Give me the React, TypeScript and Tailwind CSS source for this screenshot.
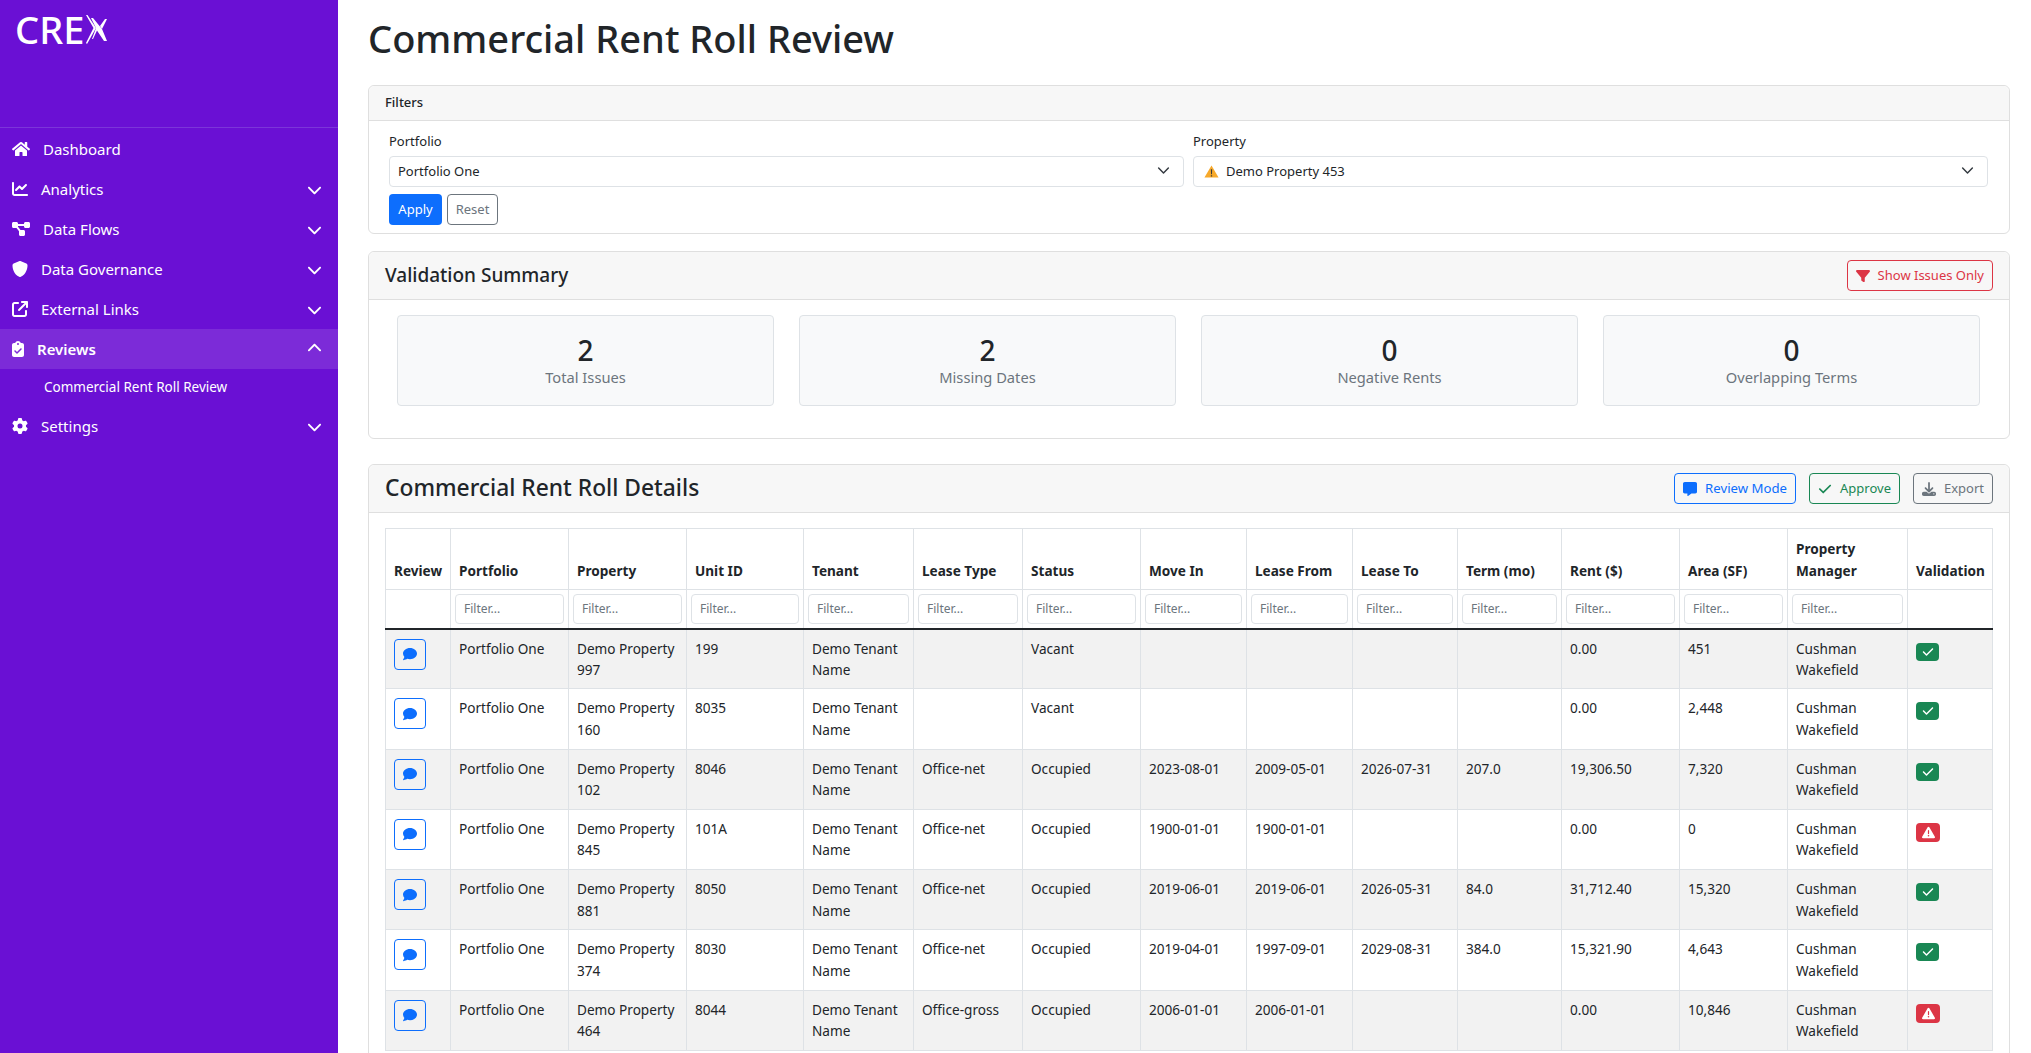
import { FaChartLine, FaChevronDown, FaChevronUp, FaDiagramProject, FaGear, FaShield, FaArrowUpRightFromSquare, FaClipboardCheck, FaCheck, FaFilter, FaComment, FaMessage, FaDownload, FaTriangleExclamation } from "react-icons/fa6";
import { FaHome } from "react-icons/fa";
import type { ReactNode } from "react";

const font = { fontFamily: '"Noto Sans", sans-serif' };

const nav: { label: string; icon: ReactNode; arrow?: boolean }[] = [
  { label: "Dashboard", icon: <FaHome className="h-4 w-[18px]" /> },
  { label: "Analytics", icon: <FaChartLine className="h-4 w-4" />, arrow: true },
  { label: "Data Flows", icon: <FaDiagramProject className="h-4 w-[18px]" />, arrow: true },
  { label: "Data Governance", icon: <FaShield className="h-4 w-4" />, arrow: true },
  { label: "External Links", icon: <FaArrowUpRightFromSquare className="h-4 w-4" />, arrow: true },
];

const columns = [
  { label: "Review", width: "w-[65px]" },
  { label: "Portfolio", width: "w-[118px]", filter: true },
  { label: "Property", width: "w-[118px]", filter: true },
  { label: "Unit ID", width: "w-[117px]", filter: true },
  { label: "Tenant", width: "w-[110px]", filter: true },
  { label: "Lease Type", width: "w-[109px]", filter: true },
  { label: "Status", width: "w-[118px]", filter: true },
  { label: "Move In", width: "w-[106px]", filter: true },
  { label: "Lease From", width: "w-[106px]", filter: true },
  { label: "Lease To", width: "w-[105px]", filter: true },
  { label: "Term (mo)", width: "w-[104px]", filter: true },
  { label: "Rent ($)", width: "w-[118px]", filter: true },
  { label: "Area (SF)", width: "w-[108px]", filter: true },
  { label: "Property Manager", width: "w-[120px]", filter: true },
  { label: "Validation", width: "w-[85px]" },
];

const rows = [
  { property: "997", unit: "199", type: "", status: "Vacant", moveIn: "", from: "", to: "", term: "", rent: "0.00", area: "451", ok: true },
  { property: "160", unit: "8035", type: "", status: "Vacant", moveIn: "", from: "", to: "", term: "", rent: "0.00", area: "2,448", ok: true },
  { property: "102", unit: "8046", type: "Office-net", status: "Occupied", moveIn: "2023-08-01", from: "2009-05-01", to: "2026-07-31", term: "207.0", rent: "19,306.50", area: "7,320", ok: true },
  { property: "845", unit: "101A", type: "Office-net", status: "Occupied", moveIn: "1900-01-01", from: "1900-01-01", to: "", term: "", rent: "0.00", area: "0", ok: false },
  { property: "881", unit: "8050", type: "Office-net", status: "Occupied", moveIn: "2019-06-01", from: "2019-06-01", to: "2026-05-31", term: "84.0", rent: "31,712.40", area: "15,320", ok: true },
  { property: "374", unit: "8030", type: "Office-net", status: "Occupied", moveIn: "2019-04-01", from: "1997-09-01", to: "2029-08-31", term: "384.0", rent: "15,321.90", area: "4,643", ok: true },
  { property: "464", unit: "8044", type: "Office-gross", status: "Occupied", moveIn: "2006-01-01", from: "2006-01-01", to: "", term: "", rent: "0.00", area: "10,846", ok: false },
];

const stats = [
  { value: "2", label: "Total Issues" },
  { value: "2", label: "Missing Dates" },
  { value: "0", label: "Negative Rents" },
  { value: "0", label: "Overlapping Terms" },
];

function Logo() {
  return (
    <div className="flex items-start h-[128px] pl-[15px] pt-[3px] border-b border-[#7c35d9]">
      <span className="text-[38px] leading-[52px] font-medium text-white">CRE</span>
      <svg viewBox="0 0 21 29" className="w-[21px] h-[29px] mt-[12px] ml-[2px]" fill="white">
        <path d="M0 0 1.5 0 10 13 1 29 0 28 7.5 13Z" />
        <path d="M5 3 7 3 16 14 21 26 18 26 11 15.5 7 24 6 24 10 13Z" />
        <path d="M14 11 19 4 21 4 16 14Z" />
      </svg>
    </div>
  );
}

function NavRow({ label, icon, arrow }: { label: string; icon: ReactNode; arrow?: boolean }) {
  return (
    <a className="flex items-center h-10 pl-3 pr-[16px] text-[15px] text-white">
      {icon}
      <span className="ml-[13px] flex-1">{label}</span>
      {arrow && <FaChevronDown className="w-[15px] h-[15px]" />}
    </a>
  );
}

function Sidebar() {
  return (
    <aside className="w-[338px] shrink-0 bg-[#6a10d4] text-white">
      <Logo />
      <nav className="pt-px">
        {nav.map((n) => (
          <NavRow key={n.label} {...n} />
        ))}
        <a className="flex items-center h-10 pl-3 pr-[16px] bg-[#7c2bd8] text-[15px] font-semibold">
          <FaClipboardCheck className="w-3 h-4" />
          <span className="ml-[13px] flex-1">Reviews</span>
          <FaChevronUp className="w-[15px] h-[15px] -mt-0.5" />
        </a>
        <a className="flex items-center h-[37px] pl-11 text-[13.5px]">Commercial Rent Roll Review</a>
        <NavRow label="Settings" icon={<FaGear className="h-4 w-4" />} arrow />
      </nav>
    </aside>
  );
}

function Select({ children }: { children: ReactNode }) {
  return (
    <div className="flex items-center justify-between h-[31px] pl-2 pr-[13px] border border-[#dee2e6] rounded bg-white text-[13px] text-[#212529]">
      <span className="flex items-center">{children}</span>
      <svg viewBox="0 0 16 16" className="w-[13px] h-[13px] -mt-[2px]" fill="none" stroke="#343a40" strokeWidth="1.8" strokeLinecap="round" strokeLinejoin="round">
        <path d="m2 5 6 6 6-6" />
      </svg>
    </div>
  );
}

function WarnIcon() {
  return (
    <svg viewBox="0 0 16 14" className="w-[15px] h-[13px] mr-[7px] ml-0.5">
      <path d="M8 .5 15.6 13.5H.4Z" fill="#f7a92b" />
      <path d="M7.3 4.5h1.4l-.2 5.5h-1Z M7.3 11h1.4v1.4H7.3Z" fill="#3b3b3b" />
    </svg>
  );
}

function Card({ title, titleClass, tall, action, children, className }: { title: string; titleClass: string; tall?: boolean; action?: ReactNode; children: ReactNode; className?: string }) {
  return (
    <section className={`border border-[#dfdfdf] rounded-md bg-white ${className ?? ""}`}>
      <header className={`flex items-center justify-between border-b border-[#dfdfdf] bg-[#f7f7f7] rounded-t-md pl-4 pr-4 ${tall ? "h-[48px]" : "h-[35px]"}`}>
        <h5 className={`font-medium text-[#212529] ${titleClass}`}>{title}</h5>
        {action}
      </header>
      {children}
    </section>
  );
}

function OutlineBtn({ color, icon, children }: { color: string; icon: ReactNode; children: ReactNode }) {
  return (
    <button className={`flex items-center h-[31px] px-2 border rounded bg-transparent ${color}`}>
      {icon}
      <span className="ml-2">{children}</span>
    </button>
  );
}

function DetailsTable() {
  const cell = "border border-[#dee2e6]";
  return (
    <table className="table-fixed w-[1607px] border-collapse text-[13.6px] leading-[21.5px] text-[#212529]">
      <colgroup>
        {columns.map((c) => (
          <col key={c.label} className={c.width} />
        ))}
      </colgroup>
      <thead>
        <tr className="h-[61px]">
          {columns.map((c) => (
            <th key={c.label} className={`${cell} px-2 pb-2 align-bottom text-left font-bold`}>
              {c.label}
            </th>
          ))}
        </tr>
        <tr className="h-[39px]">
          {columns.map((c) => (
            <td key={c.label} className="border border-[#dee2e6] border-b-2 border-b-[#212529] px-1 py-0 align-middle">
              {c.filter && (
                <input
                  placeholder="Filter..."
                  className="block w-full h-[30px] px-2 border border-[#dee2e6] rounded text-xs placeholder:text-[#6c757d]"
                />
              )}
            </td>
          ))}
        </tr>
      </thead>
      <tbody>
        {rows.map((r, i) => {
          const values = ["Portfolio One", `Demo Property ${r.property}`, r.unit, "Demo Tenant Name", r.type, r.status, r.moveIn, r.from, r.to, r.term, r.rent, r.area, "Cushman Wakefield"];
          return (
            <tr key={r.property} className={`h-[60.3px] ${i % 2 === 0 ? "bg-[#f2f2f2]" : "bg-white"}`}>
              <td className={`${cell} pl-2 py-0 align-top`}>
                <button className="flex items-center justify-center w-8 h-[31px] mt-[9px] border border-[#0d6efd] rounded text-[#0d6efd]">
                  <FaComment className="w-[14px] h-[14px]" />
                </button>
              </td>
              {values.map((v, j) => (
                <td key={j} className={`${cell} px-2 pt-2 pb-0 align-top`}>
                  {v}
                </td>
              ))}
              <td className={`${cell} pl-2 py-0 align-top`}>
                {r.ok ? (
                  <span className="flex items-center justify-center w-[23px] h-[18px] mt-[13px] rounded bg-[#198754] text-white">
                    <FaCheck className="w-3 h-3" />
                  </span>
                ) : (
                  <span className="flex items-center justify-center w-6 h-[19px] mt-[13px] rounded bg-[#dc3545] text-white">
                    <FaTriangleExclamation className="w-[13px] h-[13px]" />
                  </span>
                )}
              </td>
            </tr>
          );
        })}
      </tbody>
    </table>
  );
}

export default function App() {
  return (
    <div className="flex h-screen overflow-hidden bg-white" style={font}>
      <Sidebar />
      <main className="flex-1 min-w-0 pl-[30px] pr-[21px] pt-[10px]">
        <h1 className="text-[38px] leading-[56px] font-medium text-[#212529] mb-[19px]">Commercial Rent Roll Review</h1>

        <Card title="Filters" titleClass="text-[13px]" className="mb-[17px]">
          <div className="pl-[20px] pr-[21px] pt-[10px] pb-2">
            <div className="grid grid-cols-2 gap-x-[9px]">
              <div>
                <label className="block text-[13px] leading-5 mb-[5px] text-[#212529]">Portfolio</label>
                <Select>Portfolio One</Select>
              </div>
              <div>
                <label className="block text-[13px] leading-5 mb-[5px] text-[#212529]">Property</label>
                <Select>
                  <WarnIcon />
                  Demo Property 453
                </Select>
              </div>
            </div>
            <div className="flex gap-[5px] mt-[7px]">
              <button className="h-[31px] w-[53px] rounded bg-[#0d6efd] text-[13px] text-white">Apply</button>
              <button className="h-[31px] w-[51px] rounded border border-[#6c757d] text-[13px] text-[#6c757d]">Reset</button>
            </div>
          </div>
        </Card>

        <Card
          title="Validation Summary"
          titleClass="text-[19px]"
          tall
          className="mb-[25px]"
          action={
            <OutlineBtn color="text-[13px] border-[#dc3545] text-[#dc3545]" icon={<FaFilter className="w-[14px] h-[14px]" />}>
              Show Issues Only
            </OutlineBtn>
          }
        >
          <div className="grid grid-cols-4 gap-x-[25px] pl-[28px] pr-[29px] pt-[15px] pb-[32px]">
            {stats.map((s) => (
              <div key={s.label} className="flex flex-col items-center justify-center h-[91px] border border-[#dee2e6] rounded bg-[#f8f9fa]">
                <div className="text-[28px] leading-[30px] font-medium text-[#212529]">{s.value}</div>
                <div className="text-[14.7px] leading-5 text-[#6c757d] mt-[2px]">{s.label}</div>
              </div>
            ))}
          </div>
        </Card>

        <Card
          title="Commercial Rent Roll Details"
          titleClass="text-[22.8px]"
          tall
          action={
            <div className="flex gap-[13px]">
              <OutlineBtn color="text-[13.2px] border-[#0d6efd] text-[#0d6efd]" icon={<FaMessage className="w-[14px] h-[14px]" />}>
                Review Mode
              </OutlineBtn>
              <OutlineBtn color="text-[13px] border-[#198754] text-[#198754]" icon={<FaCheck className="w-[14px] h-[14px]" />}>
                Approve
              </OutlineBtn>
              <OutlineBtn color="text-[13px] border-[#6c757d] text-[#6c757d]" icon={<FaDownload className="w-[14px] h-[14px]" />}>
                Export
              </OutlineBtn>
            </div>
          }
        >
          <div className="pl-4 pt-[15px] pb-4">
            <DetailsTable />
          </div>
        </Card>
      </main>
    </div>
  );
}
